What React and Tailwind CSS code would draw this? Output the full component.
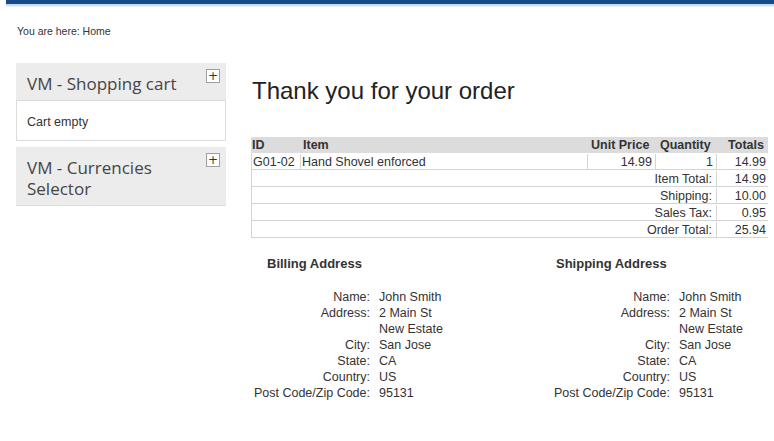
import React from "react";

const addr = [
  ["Name:", "John Smith"],
  ["Address:", "2 Main St"],
  ["", "New Estate"],
  ["City:", "San Jose"],
  ["State:", "CA"],
  ["Country:", "US"],
  ["Post Code/Zip Code:", "95131"],
];

function Address({ title, headPad }) {
  return (
    <div className="w-[300px] shrink-0">
      <div className={`${headPad} text-[13px] leading-[16px] font-bold text-[#333]`}>{title}</div>
      <div className="mt-[17px] grid grid-cols-[119px_1fr] gap-x-[9px] text-[12.5px] leading-[16px] text-[#333]">
        {addr.map(([l, v], i) => (
          <React.Fragment key={i}>
            <div className="text-right whitespace-nowrap">{l}</div>
            <div className="whitespace-nowrap">{v}</div>
          </React.Fragment>
        ))}
      </div>
    </div>
  );
}

function Module({ title, children }) {
  return (
    <div>
      <div className="relative bg-[#ececec] border-b border-[#dcdcdc] pl-[11px] pr-[30px] pt-[10px] pb-[6px]">
        <div className="font-['Open_Sans',sans-serif] text-[17px] leading-[21px] text-[#454545]">{title}</div>
        <div className="absolute top-[6px] right-[6px] w-[14px] h-[14px] border border-[#a0a0a0] bg-white flex items-center justify-center text-[12px] leading-none text-[#333] font-['DejaVu_Sans',sans-serif]">+</div>
      </div>
      {children}
    </div>
  );
}

export default function App() {
  const sumRows = [
    ["Item Total:", "14.99"],
    ["Shipping:", "10.00"],
    ["Sales Tax:", "0.95"],
    ["Order Total:", "25.94"],
  ];
  return (
    <div className="w-[774px] h-[441px] bg-white overflow-hidden font-['Liberation_Sans',Arial,sans-serif] text-[#333]">
      <div className="ml-[6px] h-[4px] bg-[#174a86]" />
      <div className="ml-[6px] h-[3px] bg-gradient-to-b from-[#b9d0e8] to-[#eef4fa]" />
      <div className="pl-[17px] mt-[18px] text-[10.5px] leading-[12px] text-[#333]">You are here: Home</div>

      <div className="flex mt-[26px]">
        <div className="ml-[16px] w-[210px] shrink-0 flex flex-col gap-[6px]">
          <Module title="VM - Shopping cart">
            <div className="h-[40px] border border-t-0 border-[#dcdcdc] bg-white pl-[10px] pt-[3px] flex items-center text-[12.5px] text-[#333]">
              Cart empty
            </div>
          </Module>
          <Module title={<>VM - Currencies<br />Selector</>} />
        </div>

        <div className="ml-[25px] w-[517px] shrink-0">
          <h1 className="mt-[14px] text-[24px] leading-[28px] text-[#222] font-normal pl-[1px]">Thank you for your order</h1>

          <div className="mt-[32px] text-[12.5px] text-[#333]">
            <div className="flex h-[16px] leading-[17px] bg-[#dcdcdc] font-bold">
              <div className="w-[50px] pl-[1px]">ID</div>
              <div className="w-[287px] pl-[2px]">Item</div>
              <div className="w-[68px] pl-[3px] whitespace-nowrap">Unit Price</div>
              <div className="w-[61px] pl-[4px]">Quantity</div>
              <div className="w-[51px] text-right pr-[4px]">Totals</div>
            </div>
            <div className="flex h-[17px] leading-[16px] pt-[1px] border-l border-b border-[#d4d4d4]">
              <div className="w-[49px] pl-[1px] border-r border-[#d4d4d4]">G01-02</div>
              <div className="w-[287px] pl-[1px] border-r border-[#d4d4d4]">Hand Shovel enforced</div>
              <div className="w-[68px] text-right pr-[3px] border-r border-[#d4d4d4]">14.99</div>
              <div className="w-[61px] text-right pr-[3px] border-r border-[#d4d4d4]">1</div>
              <div className="w-[51px] text-right pr-[2px]">14.99</div>
            </div>
            {sumRows.map(([l, v]) => (
              <div key={l} className="flex h-[17px] leading-[16px] pt-[1px] border-l border-b border-[#d4d4d4]">
                <div className="w-[465px] text-right pr-[4px] border-r border-[#d4d4d4]">{l}</div>
                <div className="w-[51px] text-right pr-[2px]">{v}</div>
              </div>
            ))}
          </div>

          <div className="flex mt-[18px]">
            <Address title="Billing Address" headPad="pl-[16px]" />
            <Address title="Shipping Address" headPad="pl-[5px]" />
          </div>
        </div>
      </div>
    </div>
  );
}
